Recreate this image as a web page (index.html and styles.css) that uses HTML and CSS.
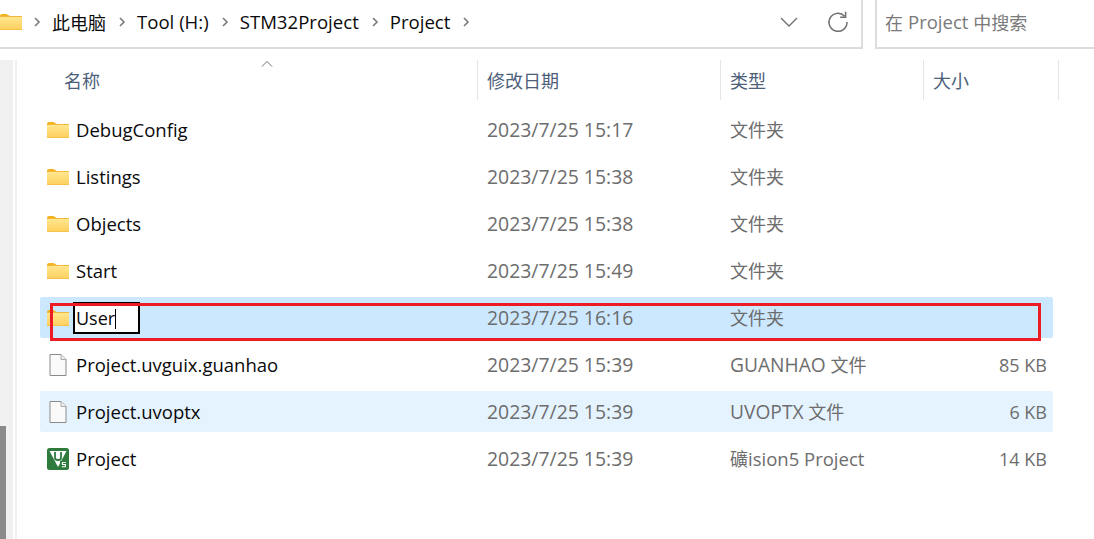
FILE: index.html
```html
<!DOCTYPE html>
<html lang="zh-CN">
<head>
    <meta charset="UTF-8">
    <meta name="viewport" content="width=device-width, initial-scale=1.0">
    <title>Project</title>
    <link rel="stylesheet" href="styles.css">
</head>
<body>
    <svg class="defs" width="0" height="0">
        <defs>
            <linearGradient id="folderFill" x1="0" y1="0" x2="0" y2="1">
                <stop offset="0" stop-color="#ffe68f"/>
                <stop offset="1" stop-color="#fdd05f"/>
            </linearGradient>
            <symbol id="folder" viewBox="0 0 22 16">
                <path d="M0 2q0-2 2-2h4q1 0 2 1l2 1H0z" fill="#f5b21f"/>
                <rect x="0" y="2" width="22" height="14" fill="#f2b83c"/>
                <rect x="0" y="3" width="22" height="12.4" fill="url(#folderFill)"/>
            </symbol>
            <symbol id="file" viewBox="0 0 18 22">
                <path d="M1 .5h11l5 5v16H1z" fill="#fafafa" stroke="#8a8a8a"/>
                <path d="M12 .5v5h5" fill="#eee" stroke="#a8a8a8"/>
            </symbol>
            <symbol id="crumb" viewBox="0 0 8 12">
                <path d="M2 2l4 4-4 4" fill="none" stroke="#7a7a7a" stroke-width="1.6"/>
            </symbol>
        </defs>
    </svg>

    <div class="topbar">
        <div class="address">
            <svg class="address-folder"><use href="#folder"/></svg>
            <svg class="crumb-sep"><use href="#crumb"/></svg>
            <span class="crumb crumb-cjk">此电脑</span>
            <svg class="crumb-sep"><use href="#crumb"/></svg>
            <span class="crumb">Tool (H:)</span>
            <svg class="crumb-sep"><use href="#crumb"/></svg>
            <span class="crumb">STM32Project</span>
            <svg class="crumb-sep"><use href="#crumb"/></svg>
            <span class="crumb">Project</span>
            <svg class="crumb-sep"><use href="#crumb"/></svg>
            <svg class="address-chevron" viewBox="0 0 18 10"><path d="M1 1l8 8 8-8" fill="none" stroke="#6e6e6e" stroke-width="1.3"/></svg>
            <svg class="address-refresh" viewBox="0 0 22 22"><path d="M17.6 5.2A9 9 0 1 0 20 11" fill="none" stroke="#6e6e6e" stroke-width="1.5"/><path d="M18.6 0.8v5.4h-5.4" fill="none" stroke="#6e6e6e" stroke-width="1.5"/></svg>
        </div>
        <div class="search">在 <span class="latin">Project</span> 中搜索</div>
    </div>

    <div class="main">
        <div class="sidebar"><div class="sidebar-thumb"></div></div>
        <div class="content">
            <div class="columns">
                <div class="col col-name">名称<svg class="sort-arrow" viewBox="0 0 12 6"><path d="M1 5.5l5-5 5 5" fill="none" stroke="#6e6e6e"/></svg></div>
                <div class="col col-date">修改日期</div>
                <div class="col col-type">类型</div>
                <div class="col col-size">大小</div>
            </div>
            <div class="rows">
                <div class="row">
                    <div class="cell-name"><svg class="icon"><use href="#folder"/></svg>DebugConfig</div>
                    <div class="cell cell-date">2023/7/25 15:17</div>
                    <div class="cell cell-type">文件夹</div>
                    <div class="cell-size"></div>
                </div>
                <div class="row">
                    <div class="cell-name"><svg class="icon"><use href="#folder"/></svg>Listings</div>
                    <div class="cell cell-date">2023/7/25 15:38</div>
                    <div class="cell cell-type">文件夹</div>
                    <div class="cell-size"></div>
                </div>
                <div class="row">
                    <div class="cell-name"><svg class="icon"><use href="#folder"/></svg>Objects</div>
                    <div class="cell cell-date">2023/7/25 15:38</div>
                    <div class="cell cell-type">文件夹</div>
                    <div class="cell-size"></div>
                </div>
                <div class="row">
                    <div class="cell-name"><svg class="icon"><use href="#folder"/></svg>Start</div>
                    <div class="cell cell-date">2023/7/25 15:49</div>
                    <div class="cell cell-type">文件夹</div>
                    <div class="cell-size"></div>
                </div>
                <div class="row row-selected">
                    <div class="cell-name">
                        <svg class="icon"><use href="#folder"/></svg>
                        <span class="rename">User</span>
                    </div>
                    <div class="cell cell-date">2023/7/25 16:16</div>
                    <div class="cell cell-type">文件夹</div>
                    <div class="cell-size"></div>
                    <div class="annotation"></div>
                </div>
                <div class="row">
                    <div class="cell-name"><svg class="icon icon-file"><use href="#file"/></svg>Project.uvguix.guanhao</div>
                    <div class="cell cell-date">2023/7/25 15:39</div>
                    <div class="cell"><span class="latin-wide">GUANHAO</span> 文件</div>
                    <div class="cell-size">85 KB</div>
                </div>
                <div class="row row-hover">
                    <div class="cell-name"><svg class="icon icon-file"><use href="#file"/></svg>Project.uvoptx</div>
                    <div class="cell cell-date">2023/7/25 15:39</div>
                    <div class="cell"><span class="latin-wide">UVOPTX</span> 文件</div>
                    <div class="cell-size">6 KB</div>
                </div>
                <div class="row">
                    <div class="cell-name">
                        <svg class="icon icon-keil" viewBox="0 0 22 22">
                            <rect width="22" height="22" rx="2.5" fill="#2f7a3d"/>
                            <path d="M2.5 3h17L11 19z" fill="#fff"/>
                            <path d="M8 4v6q0 2 3 2t3-2V4" fill="none" stroke="#2f7a3d" stroke-width="1.8"/>
                            <rect x="13" y="13" width="7" height="7" fill="#2f7a3d"/>
                            <path d="M19 14.5h-3.6v2h3v2.2h-3.6" fill="none" stroke="#fff" stroke-width="1.1"/>
                        </svg>Project
                    </div>
                    <div class="cell cell-date">2023/7/25 15:39</div>
                    <div class="cell cell-type">礦<span class="latin">ision5 Project</span></div>
                    <div class="cell-size">14 KB</div>
                </div>
            </div>
        </div>
    </div>
</body>
</html>
```

FILE: styles.css
```css
* {
    box-sizing: border-box;
}

body {
    margin: 0;
    width: 1094px;
    height: 539px;
    overflow: hidden;
    background-color: white;
    font-family: "Open Sans", "Noto Sans CJK SC", sans-serif;
    font-size: 18px;
    color: #0a0a0a;
}

.defs {
    display: block;
    height: 0;
}

.latin {
    font-size: 18.5px;
}

.latin-wide {
    font-size: 19.2px;
}

.topbar {
    display: flex;
    height: 49px;
    gap: 12px;
}

.address {
    display: flex;
    align-items: center;
    width: 863px;
    padding-bottom: 4px;
    border-right: 2px solid #dcdcdc;
    border-bottom: 2px solid #dcdcdc;
}

.address-folder {
    width: 22px;
    height: 16px;
    margin-right: 11px;
}

.crumb-sep {
    width: 8px;
    height: 12px;
    margin: 0 11px 0 0;
}

.crumb {
    margin-right: 12px;
    font-size: 18.6px;
}

.crumb-cjk {
    font-size: 18px;
}

.address-chevron {
    width: 18px;
    height: 10px;
    margin-left: 299px;
}

.address-refresh {
    width: 22px;
    height: 22px;
    margin-left: 29px;
}

.search {
    flex: 1;
    display: flex;
    align-items: center;
    gap: 5px;
    padding: 0 0 4px 8px;
    border-left: 2px solid #dcdcdc;
    border-bottom: 2px solid #dcdcdc;
    color: #7a7a7a;
}

.main {
    display: flex;
    height: 490px;
    padding-top: 11px;
}

.sidebar {
    position: relative;
    width: 17px;
    background-color: #f0f0f0;
    border-right: 2px solid #f0f0f0;
    box-shadow: inset -4px 0 0 -2px white;
}

.sidebar-thumb {
    position: absolute;
    left: 0;
    top: 366px;
    bottom: 0;
    width: 6px;
    background-color: #8a8a8a;
}

.content {
    flex: 1;
}

.columns {
    display: grid;
    grid-template-columns: 461px 243px 203px 135px;
    height: 40px;
    color: #4c607a;
}

.col {
    position: relative;
    display: flex;
    align-items: center;
    padding-left: 9px;
    border-right: 1px solid #e5e5e5;
}

.col-name {
    padding-left: 47px;
}

.sort-arrow {
    position: absolute;
    left: 244px;
    top: 1px;
    width: 12px;
    height: 6px;
}

.rows {
    display: flex;
    flex-direction: column;
    gap: 6px;
    margin: 9px 0 0 23px;
    width: 1013px;
}

.row {
    position: relative;
    display: grid;
    grid-template-columns: 437px 243px 203px 1fr;
    align-items: center;
    height: 41px;
    border-radius: 2px;
}

.row-selected {
    background-color: #cce8ff;
}

.row-hover {
    background-color: #e5f3ff;
}

.cell-name {
    display: flex;
    align-items: center;
    padding-left: 7px;
    font-size: 18.5px;
}

.icon {
    flex: none;
    width: 22px;
    height: 16px;
    margin-right: 7px;
}

.icon-file {
    height: 22px;
    width: 18px;
    margin: 0 9px 0 2px;
}

.icon-keil {
    height: 22px;
}

.cell {
    padding-left: 10px;
    color: #6d6d6d;
}

.cell-date {
    font-size: 19.4px;
}

.cell-type {
    padding-bottom: 2px;
}

.cell-size {
    padding-right: 6px;
    text-align: right;
    color: #6d6d6d;
}

.rename {
    height: 32px;
    width: 67px;
    margin: 0 0 0 -3px;
    padding-left: 1px;
    border: 2px solid black;
    background-color: white;
    font-size: 18px;
    line-height: 28px;
}

.rename::after {
    content: "";
    display: inline-block;
    width: 1px;
    height: 20px;
    vertical-align: -4px;
    background-color: black;
}

.annotation {
    position: absolute;
    left: 10px;
    top: 6px;
    width: 991px;
    height: 38px;
    border: 3px solid #ed1c24;
}
```
